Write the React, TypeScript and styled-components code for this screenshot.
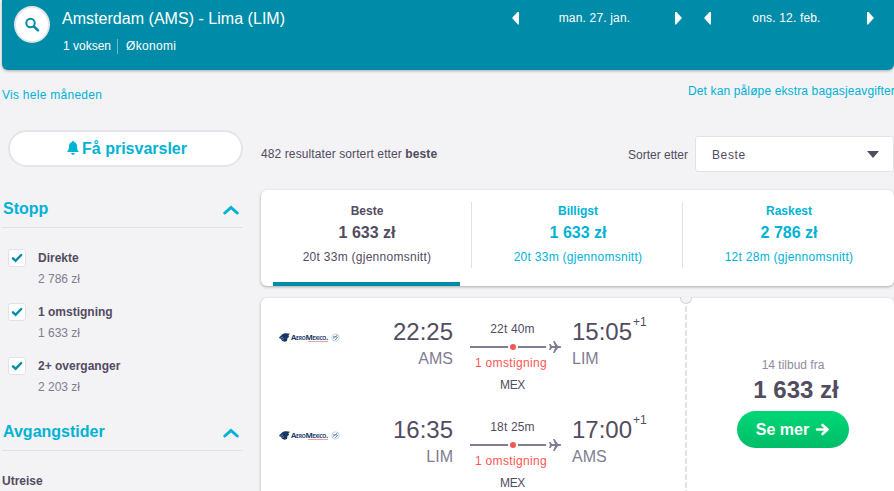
import styled, { createGlobalStyle } from "styled-components";

const GlobalStyle = createGlobalStyle`
  * {
    box-sizing: border-box;
  }
  body {
    margin: 0;
    overflow: hidden;
    background-color: #f3f2f5;
    color: #524c61;
    font-family: "Liberation Sans", Arial, sans-serif;
    font-size: 12px;
    line-height: 16px;
  }
  h1, h2, p {
    margin: 0;
  }
  button {
    padding: 0;
    border: 0;
    background: none;
    color: inherit;
    font-family: inherit;
  }
`;

const Page = styled.div`
  height: 491px;
  padding-left: 2px;
  overflow: hidden;
`;

const Header = styled.header`
  display: flex;
  height: 70px;
  padding: 6px 20px 0 12px;
  border-radius: 0 0 6px 6px;
  background-color: #008ca8;
  box-shadow: 0 1px 3px rgba(0, 0, 0, 0.3);
  color: white;
`;

const SearchButton = styled.button`
  display: flex;
  align-items: center;
  justify-content: center;
  width: 36px;
  height: 37px;
  margin-right: 12px;
  border: 2px solid #e6e4eb;
  border-radius: 50%;
  background-color: white;
`;

const Title = styled.h1`
  margin-top: 3px;
  font-size: 16px;
  font-weight: normal;
  letter-spacing: 0.03px;
  line-height: 20px;
  white-space: nowrap;
`;

const Details = styled.div`
  display: flex;
  margin-top: 10px;
  padding-left: 1px;
  line-height: 15px;
  span + span {
    margin-left: 6px;
    padding-left: 8px;
    border-left: 1px solid #66bacb;
    letter-spacing: 0.3px;
  }
`;

const Dates = styled.div`
  display: flex;
  gap: 22px;
  margin-left: auto;
`;

const DateNav = styled.div`
  display: flex;
  align-items: center;
  justify-content: space-between;
  width: 170px;
  height: 24px;
  letter-spacing: 0.17px;
  span {
    margin-right: 5px;
  }
`;

const Arrow = styled.button<{ $next?: boolean }>`
  width: 7px;
  height: 13px;
  background-color: white;
  clip-path: ${(props) =>
    props.$next
      ? "polygon(0 0, 15% 0, 100% 50%, 15% 100%, 0 100%)"
      : "polygon(100% 0, 100% 100%, 85% 100%, 0 50%, 85% 0)"};
`;

const Links = styled.div`
  display: flex;
  justify-content: space-between;
  height: 60px;
  padding-top: 13px;
  color: #00b2d6;
  white-space: nowrap;
`;

const MonthLink = styled.span`
  margin-top: 4px;
  letter-spacing: 0.27px;
`;

const BaggageLink = styled.span`
  width: 206px;
  letter-spacing: 0.13px;
`;

const Columns = styled.div`
  display: grid;
  grid-template-columns: 241px 633px;
  column-gap: 18px;
`;

const AlertButton = styled.button`
  display: flex;
  align-items: center;
  justify-content: center;
  gap: 3px;
  width: 235px;
  height: 37px;
  margin-left: 6px;
  padding-left: 3px;
  border: 2px solid #e6e4eb;
  border-radius: 19px;
  background-color: white;
  color: #00b2d6;
  font-size: 16px;
  font-weight: bold;
  svg {
    margin-top: -2px;
  }
`;

const Section = styled.section`
  margin-top: 32px;
  & + & {
    margin-top: 12px;
  }
`;

const SectionHead = styled.div`
  display: flex;
  justify-content: space-between;
  height: 29px;
  padding-right: 4px;
  border-bottom: 1px solid #e3e1e8;
  color: #00b2d6;
  h2 {
    padding-left: 1px;
    font-size: 16px;
    line-height: 20px;
  }
  svg {
    margin-top: 6px;
  }
`;

const Option = styled.label`
  display: grid;
  grid-template-columns: 18px 1fr;
  column-gap: 12px;
  height: 54px;
  padding: 1px 0 0 6px;
`;

const Options = styled.div`
  padding-top: 20px;
`;

const Checkbox = styled.span`
  display: flex;
  align-items: center;
  justify-content: center;
  width: 18px;
  height: 18px;
  border: 1px solid #e3e1e8;
  border-radius: 3px;
  background-color: white;
`;

const OptionText = styled.div`
  padding-top: 1px;
  p {
    margin-top: 5px;
    color: #827c92;
  }
`;

const Subhead = styled.p`
  margin-top: 22px;
  font-weight: bold;
`;

const SortBar = styled.div`
  display: flex;
  align-items: center;
  height: 36px;
  margin-top: 6px;
`;

const ResultCount = styled.span`
  letter-spacing: 0.1px;
`;

const SortLabel = styled.span`
  margin: 1px 7px 0 auto;
`;

const Select = styled.div`
  display: flex;
  align-items: center;
  justify-content: space-between;
  width: 199px;
  height: 36px;
  padding: 1px 14px 0 16px;
  border: 1px solid #e3e1e8;
  border-radius: 3px;
  background-color: white;
  letter-spacing: 0.6px;
`;

const Caret = styled.span`
  border: 6px solid transparent;
  border-top: 7px solid #524c61;
  border-bottom: 0;
`;

const Card = styled.div`
  display: flex;
  border-radius: 6px;
  background-color: white;
  box-shadow: 0 1px 3px rgba(0, 0, 0, 0.3);
`;

const Tabs = styled(Card)`
  height: 96px;
  margin-top: 18px;
`;

const Tab = styled.div<{ $active?: boolean }>`
  display: flex;
  flex: 1;
  flex-direction: column;
  justify-content: space-between;
  padding-top: 12px;
  color: ${(props) => (props.$active ? "#524c61" : "#00b2d6")};
  text-align: center;
  &::after {
    content: "";
    height: 4px;
    margin: 0 12px;
    background-color: ${(props) => (props.$active ? "#008ca8" : "transparent")};
  }
`;

const TabBody = styled.div`
  height: 66px;
  padding: 1px 0 0 2px;
  border-right: 1px solid #e3e1e8;
  ${Tab}:last-child & {
    border-color: transparent;
  }
  strong {
    display: block;
  }
  p {
    margin-top: 6px;
    letter-spacing: 0.27px;
  }
`;

const TabPrice = styled.strong`
  margin-top: 4px;
  font-size: 16px;
  line-height: 20px;
`;

const Ticket = styled(Card)`
  height: 230px;
  margin-top: 12px;
`;

const Legs = styled.div`
  width: 424px;
  padding-top: 18px;
`;

const Leg = styled.div`
  display: grid;
  grid-template-columns: 100px 74px 119px 1fr;
  height: 98px;
  padding-left: 18px;
`;

const Airline = styled.div`
  display: flex;
  align-items: center;
  height: 12px;
  margin-top: 15px;
`;

const AirlineName = styled.span`
  width: 39px;
  margin: 0 1px;
  background: linear-gradient(#f0a0a4, #f0a0a4) 17px 100% / 20px 1px no-repeat;
  color: #173766;
  font-family: "Open Sans", sans-serif;
  font-size: 7.8px;
  font-weight: bold;
  font-variant: small-caps;
  letter-spacing: -0.27px;
  line-height: 9px;
  white-space: nowrap;
`;

const Endpoint = styled.div<{ $align: "left" | "right" }>`
  text-align: ${(props) => props.$align};
  p {
    color: #827c92;
    font-size: 16px;
    line-height: 20px;
  }
`;

const Time = styled.div`
  height: 33px;
  font-size: 24px;
  line-height: 32px;
  white-space: nowrap;
`;

const DayOffset = styled.span`
  margin-left: 1px;
  font-size: 12px;
  line-height: 4px;
  vertical-align: 14px;
`;

const Stops = styled.div`
  margin: 0 10px 0 17px;
  padding-top: 5px;
`;

const Duration = styled.p`
  width: 85px;
  letter-spacing: 0.15px;
  text-align: center;
`;

const Route = styled.div`
  display: flex;
  align-items: center;
  height: 19px;
`;

const Track = styled.span<{ $width: number }>`
  width: ${(props) => props.$width}px;
  height: 2px;
  background-color: #827c92;
`;

const Dot = styled.span`
  width: 6px;
  height: 6px;
  margin: 0 2px;
  border-radius: 50%;
  background-color: #ff5452;
`;

const StopCount = styled.p`
  width: 82px;
  margin-top: -1px;
  color: #ff5452;
  letter-spacing: 0.35px;
  text-align: center;
`;

const Via = styled(Duration)`
  margin-top: 6px;
  letter-spacing: -0.3px;
`;

const Divider = styled.div`
  display: flex;
  flex-direction: column;
  align-items: center;
  width: 2px;
`;

const Notch = styled.span`
  flex: none;
  width: 12px;
  height: 7px;
  margin-top: -1px;
  border: 1px solid #d3d2d6;
  border-top: 0;
  border-radius: 0 0 6px 6px;
  background-color: #f3f2f5;
`;

const Dashes = styled.span`
  flex: 1;
  width: 2px;
  background: repeating-linear-gradient(white 0 2px, #e3e1e8 2px 8px);
`;

const Offer = styled.div`
  display: flex;
  flex: 1;
  flex-direction: column;
  align-items: center;
  padding: 59px 0 0 5px;
  color: #908b9d;
`;

const OfferPrice = styled.strong`
  margin-top: 2px;
  padding-left: 6px;
  color: #524c61;
  font-size: 24px;
  line-height: 30px;
`;

const MoreButton = styled.button`
  display: flex;
  align-items: center;
  justify-content: center;
  gap: 6px;
  width: 112px;
  height: 37px;
  margin-top: 6px;
  border-radius: 19px;
  background: linear-gradient(#00d775, #00bd68);
  color: white;
  font-size: 16px;
  font-weight: bold;
`;

const stops = [
  { name: "Direkte", price: "2 786 zł" },
  { name: "1 omstigning", price: "1 633 zł" },
  { name: "2+ overganger", price: "2 203 zł" },
];

const tabs = [
  { name: "Beste", price: "1 633 zł", time: "20t 33m (gjennomsnitt)" },
  { name: "Billigst", price: "1 633 zł", time: "20t 33m (gjennomsnitt)" },
  { name: "Raskest", price: "2 786 zł", time: "12t 28m (gjennomsnitt)" },
];

const legs = [
  { from: "AMS", depart: "22:25", to: "LIM", arrive: "15:05", time: "22t 40m" },
  { from: "LIM", depart: "16:35", to: "AMS", arrive: "17:00", time: "18t 25m" },
];

function Chevron() {
  return (
    <svg width="16" height="10" viewBox="0 0 16 10" fill="none">
      <path
        d="M1.8 8 8 2.4 14.2 8"
        stroke="#00b2d6"
        strokeWidth="3"
        strokeLinecap="round"
      />
    </svg>
  );
}

function AirlineLogo() {
  return (
    <Airline>
      <svg width="11" height="9" viewBox="0 0 11 9">
        <path
          d="M0 5C1 3 2 3 3 1.5 5 0 8 0 11 .8L9.5 2.2 10 4 8.5 5 8 8 5.5 8.8 3 7.8 2 6Z"
          fill="#173766"
        />
        <path d="m1 5.5 3-1.5M3 7l2-1.5" stroke="#7f9dbd" strokeWidth=".7" />
      </svg>
      <AirlineName>AeroMexico.</AirlineName>
      <svg width="9" height="9" viewBox="0 0 9 9" fill="none">
        <circle cx="4.5" cy="4.5" r="3.7" stroke="#b9cbdc" strokeWidth=".8" />
        <path d="M2 5.5 6.5 2M4 7.2 7 3.8M2 3.8h4" stroke="#6a8caf" />
      </svg>
    </Airline>
  );
}

function DateStep({ date }: { date: string }) {
  return (
    <DateNav>
      <Arrow />
      <span>{date}</span>
      <Arrow $next />
    </DateNav>
  );
}

function App() {
  return (
    <Page>
      <GlobalStyle />
      <Header>
        <SearchButton>
          <svg width="16" height="16" viewBox="0 0 16 16" fill="none">
            <circle cx="6.5" cy="6" r="4.2" stroke="#008ca8" strokeWidth="2" />
            <path
              d="m10 9.5 4 3.8"
              stroke="#008ca8"
              strokeWidth="2.5"
              strokeLinecap="round"
            />
          </svg>
        </SearchButton>
        <div>
          <Title>Amsterdam (AMS) - Lima (LIM)</Title>
          <Details>
            <span>1 voksen</span>
            <span>Økonomi</span>
          </Details>
        </div>
        <Dates>
          <DateStep date="man. 27. jan." />
          <DateStep date="ons. 12. feb." />
        </Dates>
      </Header>
      <Links>
        <MonthLink>Vis hele måneden</MonthLink>
        <BaggageLink>Det kan påløpe ekstra bagasjeavgifter</BaggageLink>
      </Links>
      <Columns>
        <aside>
          <AlertButton>
            <svg width="12" height="14" viewBox="0 0 12 14" fill="#00b2d6">
              <path d="M6 0C6.7 0 7 .4 7 1c2 .5 3 2 3 4 0 3 .5 4 2 6H0c1.5-2 2-3 2-6 0-2 1-3.5 3-4 0-.6.3-1 1-1ZM4.2 12h3.6c0 1-.8 1.8-1.8 1.8S4.2 13 4.2 12Z" />
            </svg>
            Få prisvarsler
          </AlertButton>
          <Section>
            <SectionHead>
              <h2>Stopp</h2>
              <Chevron />
            </SectionHead>
            <Options>
              {stops.map((stop) => (
                <Option key={stop.name}>
                  <Checkbox>
                    <svg width="12" height="10" viewBox="0 0 12 10" fill="none">
                      <path
                        d="m2 5.3 2.6 2.5L10.2 2"
                        stroke="#008ca8"
                        strokeWidth="2.4"
                        strokeLinecap="round"
                      />
                    </svg>
                  </Checkbox>
                  <OptionText>
                    <strong>{stop.name}</strong>
                    <p>{stop.price}</p>
                  </OptionText>
                </Option>
              ))}
            </Options>
          </Section>
          <Section>
            <SectionHead>
              <h2>Avgangstider</h2>
              <Chevron />
            </SectionHead>
            <Subhead>Utreise</Subhead>
          </Section>
        </aside>
        <main>
          <SortBar>
            <ResultCount>
              482 resultater sortert etter <strong>beste</strong>
            </ResultCount>
            <SortLabel>Sorter etter</SortLabel>
            <Select>
              Beste
              <Caret />
            </Select>
          </SortBar>
          <Tabs>
            {tabs.map((tab, i) => (
              <Tab key={tab.name} $active={i === 0}>
                <TabBody>
                  <strong>{tab.name}</strong>
                  <TabPrice>{tab.price}</TabPrice>
                  <p>{tab.time}</p>
                </TabBody>
              </Tab>
            ))}
          </Tabs>
          <Ticket>
            <Legs>
              {legs.map((leg) => (
                <Leg key={leg.from}>
                  <AirlineLogo />
                  <Endpoint $align="right">
                    <Time>{leg.depart}</Time>
                    <p>{leg.from}</p>
                  </Endpoint>
                  <Stops>
                    <Duration>{leg.time}</Duration>
                    <Route>
                      <Track $width={38} />
                      <Dot />
                      <Track $width={28} />
                      <svg width="16" height="14" viewBox="0 0 16 14">
                        <path
                          d="M3 4h1.5L6 6h3L7 1h1.5L12 6h2.500q1.500 1 0 2H12L8.500 13H7l2-5H6L4.500 10H3l1-3Z"
                          fill="#827c92"
                        />
                      </svg>
                    </Route>
                    <StopCount>1 omstigning</StopCount>
                    <Via>MEX</Via>
                  </Stops>
                  <Endpoint $align="left">
                    <Time>
                      {leg.arrive}
                      <DayOffset>+1</DayOffset>
                    </Time>
                    <p>{leg.to}</p>
                  </Endpoint>
                </Leg>
              ))}
            </Legs>
            <Divider>
              <Notch />
              <Dashes />
            </Divider>
            <Offer>
              14 tilbud fra
              <OfferPrice>1 633 zł</OfferPrice>
              <MoreButton>
                Se mer
                <svg width="15" height="13" viewBox="0 0 15 13" fill="none">
                  <path
                    d="M2 6.5h10M7.5 2l5 4.5-5 4.5"
                    stroke="white"
                    strokeWidth="2.6"
                    strokeLinecap="round"
                    strokeLinejoin="round"
                  />
                </svg>
              </MoreButton>
            </Offer>
          </Ticket>
        </main>
      </Columns>
    </Page>
  );
}

export default App;
